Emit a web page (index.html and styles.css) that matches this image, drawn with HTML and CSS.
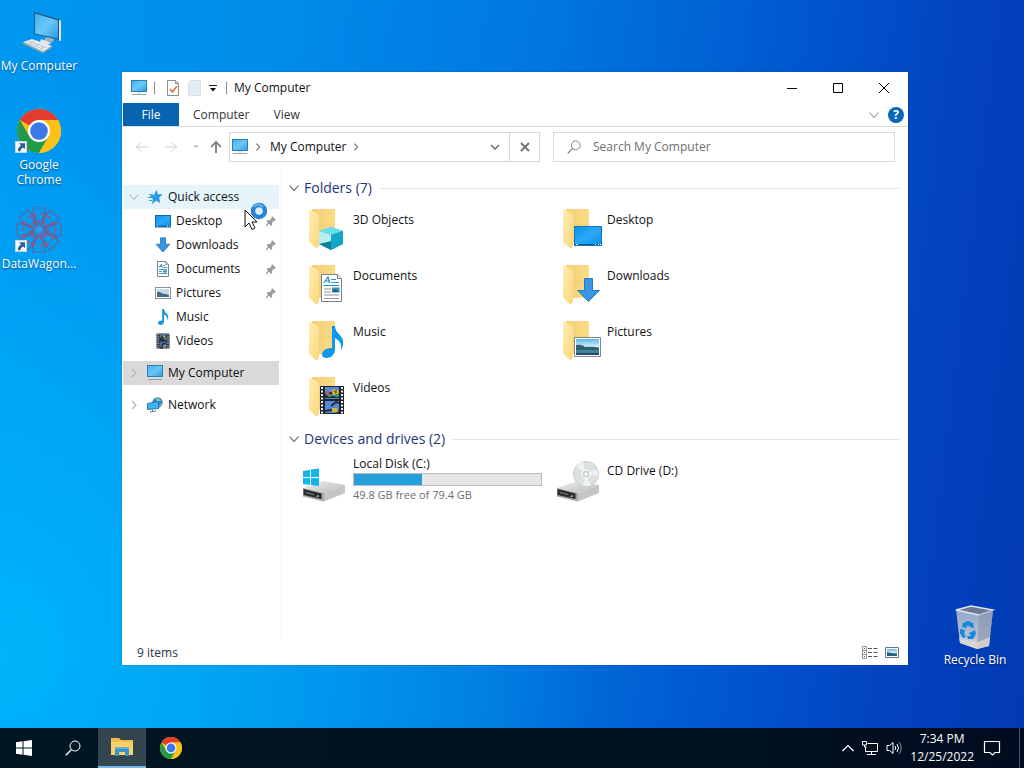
FILE: index.html
```html
<!DOCTYPE html>
<html lang="en">
<head>
<meta charset="utf-8">
<title>My Computer</title>
<link rel="stylesheet" href="styles.css">
</head>
<body>
<svg class="defs" aria-hidden="true">
  <defs>
    <linearGradient id="screen" x1="0" y1="0" x2="1" y2="1"><stop offset="0" stop-color="#3fb2f2"/><stop offset=".5" stop-color="#6cc6f9"/><stop offset="1" stop-color="#2b9be4"/></linearGradient>
    <linearGradient id="desk" x1="0" y1="0" x2="1" y2="1"><stop offset="0" stop-color="#0a93ee"/><stop offset=".5" stop-color="#2ba8f5"/><stop offset="1" stop-color="#0a93ee"/></linearGradient>
    <linearGradient id="fold" x1="0" y1="0" x2="1" y2="1"><stop offset="0" stop-color="#ffeeb8"/><stop offset="1" stop-color="#fbd778"/></linearGradient>
    <linearGradient id="foldback" x1="0" y1="0" x2="1" y2="0"><stop offset="0" stop-color="#f0cf78"/><stop offset="1" stop-color="#fbdc83"/></linearGradient>
    <linearGradient id="sky" x1="0" y1="0" x2="0" y2="1"><stop offset="0" stop-color="#5fb4ec"/><stop offset=".5" stop-color="#d9f0fa"/><stop offset=".55" stop-color="#4b8c86"/><stop offset="1" stop-color="#2d7fb8"/></linearGradient>
    <linearGradient id="metal" x1="0" y1="0" x2="1" y2="1"><stop offset="0" stop-color="#f1f1f1"/><stop offset="1" stop-color="#b9b9b9"/></linearGradient>
    <linearGradient id="bin" x1="0" y1="0" x2="0" y2="1"><stop offset="0" stop-color="#8da3c8"/><stop offset=".7" stop-color="#b5c0d2"/><stop offset="1" stop-color="#e0ddd8"/></linearGradient>
  </defs>
  <symbol id="pc" viewBox="0 0 16 16">
    <rect x=".5" y=".5" width="15" height="11" fill="url(#screen)" stroke="#2f7fae"/>
    <path d="M1 14.500h14" stroke="#8fa5b2"/><path d="M6 12h4v1.500H6z" fill="#d3e0e8"/>
  </symbol>
  <symbol id="star" viewBox="0 0 16 16">
    <path d="M9.500 1.500l1 4 4.500.2-3.300 3L13 13.500l-4-2.200L5.500 14.500l.7-4.700L3 7l4.200-.7z" fill="#2a9be6" stroke="#1781cb" stroke-width=".5"/>
    <path d="M2 5.500h4M1 8.500h4M2 11.500h3" stroke="#3a9fe2"/>
  </symbol>
  <symbol id="desktop" viewBox="0 0 16 16">
    <rect x=".5" y="2.500" width="15" height="11.500" fill="url(#desk)" stroke="#1268a8"/><path d="M1 13h14" stroke="#0b5798" /><path d="M2 13h1m9 0h1m1 0h.6" stroke="#fff"/>
  </symbol>
  <symbol id="down" viewBox="0 0 16 16">
    <path d="M5.500.8h5v6.400H15L8 15 1 7.200h4.500z" fill="#3994e0" stroke="#2477bd" stroke-width=".8"/>
  </symbol>
  <symbol id="doc" viewBox="0 0 16 16">
    <path d="M2.500.5h8l3 3v12h-11z" fill="#fff" stroke="#75838d"/><path d="M10.500.5v3h3" fill="none" stroke="#75838d" stroke-width=".7"/>
    <path d="M4.500 6.500L6.500 3l1 3.500M4 5.300h3M8.500 4.500H10M8.500 6.500h4M4 8.500h8M4 10.500h3M4 12.500h8" fill="none" stroke="#2b8dbf" stroke-width=".9"/><path d="M8 9.500h4v2H8z" fill="#3f87b5"/>
  </symbol>
  <symbol id="picture" viewBox="0 0 16 16">
    <rect x=".5" y="2.500" width="15" height="11" fill="#fff" stroke="#8b9399"/><rect x="2" y="4" width="12" height="8" fill="#c3dcea"/><path d="M2 7q3-1 5 1.500 4 0 7 1.500v2H2z" fill="#466a80"/>
  </symbol>
  <symbol id="note" viewBox="0 0 16 16">
    <path d="M7.200 0H9q.4 3 3 5 2.400 2.300.4 6Q12.500 7 9 5.600V12.500Q8.800 15.500 5.800 16 3 16.200 3 13.800 3.200 11.300 7.200 11.400z" fill="#1296e6"/>
  </symbol>
  <symbol id="film" viewBox="0 0 16 16">
    <path d="M1.500.5h13v15h-13z" fill="#272b37"/><path d="M3 1v14M13 1v14" stroke="#edf2f5" stroke-dasharray="1.200 1"/>
    <path d="M4.500 1h7v6h-7zM4.500 8.500h7v6.500h-7z" fill="#4b68a0"/><path d="M5 5.500h1.500L8 3.500h3.500M5 6.500h4M7 13.500l1.500-3h2M5 14.700h3" stroke="#18322c" stroke-width="1.400" fill="none"/><path d="M8 2.500h2.500v2H8zM8.500 12h2.500v2H8.500z" fill="#b9a234"/><path d="M10 5h1.500v1.500H10z" fill="#3d9d43"/>
  </symbol>
  <symbol id="network" viewBox="0 0 16 16">
    <circle cx="10.500" cy="5.500" r="5.200" fill="#3f86a8"/><path d="M8 1.500q4-1 6 2l-3 1.500zM12 8l3-2-1 4z" fill="#86bccd"/>
    <path d="M.5 6.500l11-2v7L.5 12.500z" fill="#41b4f2" stroke="#1f80c0"/><path d="M5.500 12.500v2M3 15l6-1" stroke="#637f90"/>
  </symbol>
  <symbol id="pin" viewBox="0 0 12 12">
    <path d="M7 1l4 4-1.200.7-.6-.2-2.200 2.200.2 2L6 11 1.500 6l1.200-1 2 .2 2-2.200-.2-1z" fill="#959ca2"/><path d="M4 7.500L1 11" stroke="#959ca2" stroke-width="1.200"/>
  </symbol>
  <symbol id="chrome" viewBox="0 0 48 48">
    <circle cx="24" cy="24" r="22" fill="#fbc116"/>
    <path d="M24 24L4.950 13A22 22 0 0 1 43.050 13H24z" fill="#e33b2e"/>
    <path d="M4.950 13A22 22 0 0 0 24 46L33.500 29.500 14.500 29.500z" fill="#229a4b"/>
    <path d="M24 13H43.050A22 22 0 0 1 24 46L33.500 29.500z" fill="#fbc116"/><circle cx="24" cy="24" r="11" fill="#fff"/><circle cx="24" cy="24" r="8.800" fill="#3b78e8"/>
  </symbol>
  <symbol id="shortcut" viewBox="0 0 12 12">
    <rect x=".5" y=".5" width="11" height="11" fill="#f4f8fb" stroke="#c3d3df"/><path d="M4 2.200h6V8L8 6.500Q5.500 7.500 5.300 10.200H3Q2.500 7 6 4.300z" fill="#2c5d9f"/>
  </symbol>
  <symbol id="folder" viewBox="0 0 48 48">
    <path d="M11 6h22q1 0 1 1v31q0 1-1 1H13z" fill="url(#foldback)"/>
    <path d="M8 6l9 5q1 1 1 2v29q-1 4-3 3L8 39z" fill="url(#fold)"/><path d="M18 22h16" stroke="#f2cd70" stroke-width=".8"/>
  </symbol>
  <symbol id="drive" viewBox="0 0 48 48">
    <path d="M2 32L22 25 44 29 23 37z" fill="url(#metal)"/><path d="M2 32l21 5v8.500L2 40.500z" fill="#a5a6a8"/><path d="M23 37l21-8v8L23 45.500z" fill="#c4c5c6"/>
    <path d="M2.500 33l18 4.500v5.500L2.500 39z" fill="#2a2c2f"/><path d="M5 36.500l8 2m2 2h3" stroke="#7d8584"/><path d="M16 40h2" stroke="#8ed8c5"/>
  </symbol>
  <symbol id="chev" viewBox="0 0 12 12"><path d="M1.500 3.500L6 8.500l4.500-5" fill="none" stroke="currentColor" stroke-width="1.100"/></symbol>
  <symbol id="chevr" viewBox="0 0 12 12"><path d="M4 2l4 4-4 4" fill="none" stroke="currentColor" stroke-width="1.300"/></symbol>
  <symbol id="lens" viewBox="0 0 16 16"><circle cx="10" cy="6" r="5" fill="none" stroke="currentColor"/><path d="M6.500 9.500L.8 15.200" stroke="currentColor" stroke-width="1.300"/></symbol>
</svg>

<main class="desktop">
  <nav class="shortcuts" aria-label="Desktop">
    <a class="shortcut" href="#">
      <svg class="ico48" viewBox="0 0 48 48">
        <path d="M19 4l27 8v20l-27-6z" fill="#245674"/><path d="M20 5.500l23 7v18l-23-5z" fill="url(#screen)"/><path d="M44 12l2 .5v20l-2 .5z" fill="#dce9f0"/>
        <path d="M31 29l8 2-1 3-9-1z" fill="#a6b4bc"/><path d="M26 31l11 4-5 2-7-3z" fill="#e0e6e9"/><path d="M8 34l9-3 20 7-9 6z" fill="#e8edef"/><path d="M8 34l20 10v1.500L8 36zM28 44l9-6v1.500l-9 6z" fill="#8ba0ab"/><path d="M12 34.500l17 7.500M14 33l18 7M20 39l5-3M15 36l5-3M25 41l5-3" stroke="#b4bfc6" stroke-width=".8"/>
      </svg>
      <span>My Computer</span>
    </a>
    <a class="shortcut" href="#">
      <span class="stack"><svg class="ico48"><use href="#chrome"/></svg><svg class="arrow"><use href="#shortcut"/></svg></span>
      <span class="two">Google Chrome</span>
    </a>
    <a class="shortcut" href="#">
      <span class="stack">
        <svg class="ico48" viewBox="0 0 48 48" fill="none" stroke="#6a6399" stroke-width="1.200">
          <g id="petals"><path d="M24 22Q16 10 18 2h12q2 8-6 20zM24 18q-8-5-8-11M24 18q8-5 8-11"/><path d="M24 22Q16 10 18 2h12q2 8-6 20zM24 18q-8-5-8-11M24 18q8-5 8-11" transform="rotate(90 24 24)"/><path d="M24 22Q16 10 18 2h12q2 8-6 20zM24 18q-8-5-8-11M24 18q8-5 8-11" transform="rotate(180 24 24)"/><path d="M24 22Q16 10 18 2h12q2 8-6 20zM24 18q-8-5-8-11M24 18q8-5 8-11" transform="rotate(270 24 24)"/></g>
          <use href="#petals" transform="rotate(45 24 24)"/>
          <circle cx="24" cy="24" r="9" stroke="#a34e80" stroke-width="2" stroke-dasharray="3 2"/><circle cx="24" cy="24" r="16" stroke="#a3567e" stroke-width="2" stroke-dasharray="3 4"/><circle cx="24" cy="24" r="4" fill="#1aa3ee" stroke="#6b6cab"/>
        </svg>
        <svg class="arrow"><use href="#shortcut"/></svg>
      </span>
      <span>DataWagon...</span>
    </a>
  </nav>

  <a class="shortcut recycle" href="#">
    <svg class="ico48" viewBox="0 0 48 48">
      <path d="M5 8l15-4 22 4-4 36-12 3-17-6z" fill="url(#bin)"/><path d="M5 8l15-4 22 4-14 5z" fill="#6e7993" stroke="#dfe7f2" stroke-width="1.300"/><path d="M28 13l14-5-4 36-12 3z" fill="#8b96ad" opacity=".65"/><path d="M8 36l19 4 12-5-1 9-12 3-17-6z" fill="#d9d6d2" opacity=".8"/>
      <g fill="#1689df"><path d="M12 21l5-2 5 2 1 5-4-1-2-2-2 3-4-1z"/><path d="M9 27l5 1-1 3 2 4-3 1-3-5z"/><path d="M18 31l6-3 1 4-3 5-5 0-1-3h4z"/></g>
    </svg>
    <span>Recycle Bin</span>
  </a>

  <section class="window" aria-label="My Computer">
    <header class="titlebar">
      <svg class="ico16 wide"><use href="#pc"/></svg>
      <span class="bar"></span>
      <button class="quick" aria-label="Properties"><svg class="ico16" viewBox="0 0 16 16"><path d="M2.500.5h8l3 3v12h-11z" fill="#fbfbfb" stroke="#8c8c8c"/><path d="M10.500.5v3h3" fill="none" stroke="#8c8c8c"/><path d="M5 9l2.500 3L12 6" fill="none" stroke="#d67737" stroke-width="1.500"/></svg></button>
      <button class="quick" aria-label="New folder"><svg class="ico16" viewBox="0 0 16 16"><path d="M3.500.5h10v15h-12V3z" fill="#e3ecf3" stroke="#d8e1e8"/></svg></button>
      <button class="more" aria-label="Customize toolbar"><svg class="ico8" viewBox="0 0 8 8"><path d="M0 1.500h8" stroke="#222"/><path d="M1 4h6L4 7.500z" fill="#111"/></svg></button>
      <span class="bar"></span>
      <h1>My Computer</h1>
      <div class="controls">
        <button aria-label="Minimize"><svg class="ico12" viewBox="0 0 12 12"><path d="M1 6.500h10" stroke="#000"/></svg></button>
        <button aria-label="Maximize"><svg class="ico12" viewBox="0 0 12 12"><path d="M1.500 1.500h9v9h-9z" fill="none" stroke="#000"/></svg></button>
        <button aria-label="Close"><svg class="ico12" viewBox="0 0 12 12"><path d="M1 1l10 10M11 1L1 11" stroke="#000"/></svg></button>
      </div>
    </header>

    <div class="ribbon">
      <button class="file">File</button>
      <button>Computer</button>
      <button>View</button>
      <span class="ribbon-end">
        <button aria-label="Expand ribbon"><svg class="ico12"><use href="#chev"/></svg></button>
        <button class="help" aria-label="Help">?</button>
      </span>
    </div>

    <div class="navbar">
      <div class="history">
        <button class="off" aria-label="Back"><svg class="ico14" viewBox="0 0 14 14"><path d="M13 7H1.500M6.500 2l-5 5 5 5" fill="none" stroke="currentColor"/></svg></button>
        <button class="off" aria-label="Forward"><svg class="ico14" viewBox="0 0 14 14"><path d="M1 7h11.500M7.500 2l5 5-5 5" fill="none" stroke="currentColor"/></svg></button>
        <button class="off" aria-label="Recent"><svg class="ico8" viewBox="0 0 8 8"><path d="M1 2h6L4 5.500z" fill="currentColor"/></svg></button>
        <button aria-label="Up"><svg class="ico14" viewBox="0 0 14 14"><path d="M7 13V2M2 7l5-5 5 5" fill="none" stroke="currentColor" stroke-width="1.700"/></svg></button>
      </div>
      <div class="address">
        <svg class="ico16"><use href="#pc"/></svg>
        <svg class="ico10 sep" viewBox="0 0 12 12"><use href="#chevr"/></svg>
        <a href="#">My Computer</a>
        <svg class="ico10 sep" viewBox="0 0 12 12"><use href="#chevr"/></svg>
        <button class="drop" aria-label="Previous locations"><svg class="ico12" viewBox="0 0 12 12"><path d="M2 4l4 4 4-4" fill="none" stroke="currentColor" stroke-width="1.700"/></svg></button>
        <button class="stop" aria-label="Stop"><svg class="ico12" viewBox="0 0 12 12"><path d="M2 2l8 8M10 2l-8 8" stroke="currentColor" stroke-width="2"/></svg></button>
      </div>
      <label class="search">
        <svg class="ico14"><use href="#lens"/></svg>
        <input type="search" aria-label="Search My Computer" placeholder="Search My Computer">
      </label>
    </div>

    <div class="body">
      <nav class="tree" aria-label="Folders">
        <a class="row hover" href="#"><svg class="ico12"><use href="#chev"/></svg><svg class="ico16"><use href="#star"/></svg><span>Quick access</span></a>
        <a class="row child" href="#"><svg class="ico16"><use href="#desktop"/></svg><span>Desktop</span><svg class="ico12 pin"><use href="#pin"/></svg></a>
        <a class="row child" href="#"><svg class="ico16"><use href="#down"/></svg><span>Downloads</span><svg class="ico12 pin"><use href="#pin"/></svg></a>
        <a class="row child" href="#"><svg class="ico16"><use href="#doc"/></svg><span>Documents</span><svg class="ico12 pin"><use href="#pin"/></svg></a>
        <a class="row child" href="#"><svg class="ico16"><use href="#picture"/></svg><span>Pictures</span><svg class="ico12 pin"><use href="#pin"/></svg></a>
        <a class="row child" href="#"><svg class="ico16"><use href="#note"/></svg><span>Music</span></a>
        <a class="row child" href="#"><svg class="ico16"><use href="#film"/></svg><span>Videos</span></a>
        <a class="row root active" href="#"><svg class="ico12"><use href="#chevr"/></svg><svg class="ico16"><use href="#pc"/></svg><span>My Computer</span></a>
        <a class="row root" href="#"><svg class="ico12"><use href="#chevr"/></svg><svg class="ico16"><use href="#network"/></svg><span>Network</span></a>
      </nav>

      <div class="content">
        <h2><svg class="ico12"><use href="#chev"/></svg>Folders (7)</h2>
        <div class="tiles folders">
          <a class="tile" href="#"><svg class="ico48" viewBox="0 0 48 48"><use href="#folder"/><path d="M18 28l12-4 12 4v13l-12 6-12-6z" fill="#2dbfd9"/><path d="M18 28l12-4 12 4-12 4z" fill="#6bdcea"/><path d="M18 28l12 4v8l-12 1z" fill="#b9eef1"/><path d="M30 32l12-4v13l-12 6z" fill="#14a5c5"/><path d="M18 41l12-3v9z" fill="#127c9b"/></svg><span>3D Objects</span></a>
          <a class="tile" href="#"><svg class="ico48" viewBox="0 0 48 48"><use href="#folder"/><rect x="19.500" y="23.500" width="27" height="19" fill="url(#desk)" stroke="#1276bb"/><path d="M20 41.500h26" stroke="#075496"/><path d="M21 41.500h2m17 0h1m2 0h1m1 0h1" stroke="#fff"/></svg><span>Desktop</span></a>
          <a class="tile" href="#"><svg class="ico48" viewBox="0 0 48 48"><use href="#folder"/><path d="M20.500 15.500h16l4 4v23h-20z" fill="#fff" stroke="#777e86"/><path d="M36.500 15.500v4h4" fill="#eee" stroke="#777e86"/><path d="M23 24l4-6 1.500 6M24 22h5M30 20.500h5M30 23.500h8M22.500 26.500h16" fill="none" stroke="#2a91ca" stroke-width="1.200"/><path d="M23 30h7M23 33h7M23 36h15M23 39.500h15" stroke="#8995a2"/><path d="M31 28.500h7.500v5H31z" fill="#3a8fb8"/><path d="M31 33l3-3 4 3z" fill="#25576d"/></svg><span>Documents</span></a>
          <a class="tile" href="#"><svg class="ico48" viewBox="0 0 48 48"><use href="#folder"/><path d="M29.500 19.500h8v12h7L33.500 42.500 22.500 31.500h7z" fill="#3a96e2" stroke="#267cc3"/></svg><span>Downloads</span></a>
          <a class="tile" href="#"><svg class="ico48" viewBox="0 0 48 48"><use href="#folder"/><path d="M31 11h3q0 5 5 9 6 7 1 15 1-9-6-12v12q-1 7-8 8-5 0-5-4 1-6 10-6z" fill="#0c98ec"/></svg><span>Music</span></a>
          <a class="tile" href="#"><svg class="ico48" viewBox="0 0 48 48"><use href="#folder"/><path d="M19.500 22.500h26v19h-26z" fill="#fff" stroke="#7b8994"/><path d="M21 24h23v16H21z" fill="url(#sky)"/><path d="M21 30q6-1 9 2 8-1 14 1v2H21z" fill="#2d626b"/><path d="M21 38h23v2H21z" fill="#2b4c67"/></svg><span>Pictures</span></a>
          <a class="tile" href="#"><svg class="ico48" viewBox="0 0 48 48"><use href="#folder"/><path d="M19 15h24v28H19z" fill="#20242f"/><path d="M21 16v27M41 16v27" stroke="#f3f3ed" stroke-width="2" stroke-dasharray="2 1.500"/><path d="M24 16h14v12H24zM24 30h14v12H24z" fill="#5a87d9"/><path d="M24 24l6-2 8 2v2H24zM30 35l5-4 3 1M24 40l6-1 8 2" stroke="#1a3431" stroke-width="2" fill="none"/><path d="M32 18h4l2 3-2 3h-4l-1-3zM31 37h5l1 4h-6z" fill="#dcb62b"/><path d="M25 20h3v4h-3z" fill="#ce5268"/><path d="M34 23h4v3h-4zM27 23h3v3h-3z" fill="#48934b"/><path d="M33 20l2 2M35 18v4" stroke="#49302f"/></svg><span>Videos</span></a>
        </div>
        <h2><svg class="ico12"><use href="#chev"/></svg>Devices and drives (2)</h2>
        <div class="tiles drives">
          <a class="tile" href="#">
            <svg class="ico48" viewBox="0 0 48 48"><use href="#drive"/><path d="M2 15l7-1.200V21H2zM10 13.600L18 12.500V21h-8zM2 22h7v7l-7-1zM10 22h8v8l-8-1z" fill="#10b5e9"/></svg>
            <span class="disk"><label for="usage">Local Disk (C:)</label><progress id="usage" max="79.4" value="29">29.6 GB used</progress><small>49.8 GB free of 79.4 GB</small></span>
          </a>
          <a class="tile" href="#">
            <svg class="ico48" viewBox="0 0 48 48"><use href="#drive"/><circle cx="31" cy="18" r="12.500" fill="#dce1e2" stroke="#c6cccd"/><path d="M31 18L21 10.500A12 12 0 0 1 28 6zM31 18l11-5a12 12 0 0 1 1 7zM31 18l5 11.500a12 12 0 0 1-8 0z" fill="#eff2f2"/><circle cx="31" cy="18" r="4" fill="#cbd1d3" stroke="#fff"/><circle cx="31" cy="18" r="1.500" fill="#fff"/></svg>
            <span class="cd">CD Drive (D:)</span>
          </a>
        </div>
      </div>
    </div>

    <footer class="status">
      <span>9 items</span>
      <button aria-label="Details view"><svg class="ico16" viewBox="0 0 16 16"><path d="M.5 1.500h4v12h-4zM.5 5.500h4M.5 9.500h4" fill="none" stroke="#777" stroke-width=".8"/><path d="M2 3.500h1M2 7.500h1M2 11.500h1M6 3.500h4m1.500 0h4M6 7.500h4m1.500 0h4M6 11.500h4m1.500 0h4" stroke="#555"/></svg></button>
      <button aria-label="Icon view"><svg class="ico16" viewBox="0 0 16 16"><path d="M1.500 2.500h13v10h-13z" fill="#fff" stroke="#647a93"/><path d="M3 4h10v7H3z" fill="url(#sky)"/><path d="M3 7l4 1 6 2v1H3z" fill="#276172"/></svg></button>
    </footer>
  </section>

  <svg class="pointer" viewBox="0 0 28 32" aria-hidden="true">
    <circle cx="17" cy="10" r="6" fill="#d9ecfa" stroke="#2b83d6" stroke-width="4.500"/><path d="M12 6q4-5 9 0" fill="none" stroke="#68b5f0" stroke-width="2"/>
    <path d="M3 9v17l4-4 3 6.500 3-1.500-3-6h5z" fill="#fff" stroke="#111"/>
  </svg>
</main>

<footer class="taskbar">
  <button class="task" aria-label="Start"><svg class="ico16" viewBox="0 0 16 16"><path d="M0 2.200L6.500 1.300V7.500H0zM7.500 1.200L16 0v7.500H7.500zM0 8.500h6.500v6.200L0 13.800zM7.500 8.500H16V16l-8.500-1.200z" fill="#fff"/></svg></button>
  <button class="task" aria-label="Search"><svg class="ico16"><use href="#lens"/></svg></button>
  <button class="task current" aria-label="File Explorer"><svg class="ico24" viewBox="0 0 24 24"><path d="M1 3h8l2 2h12v15H1z" fill="#f2bc4c"/><path d="M1 7h22v13H1z" fill="#fdd167"/><path d="M5 12h14v9h-4v-4H9v4H5z" fill="#3f91c9"/><path d="M5 12h14v2H5z" fill="#63aedb"/></svg></button>
  <button class="task" aria-label="Google Chrome"><svg class="ico24"><use href="#chrome"/></svg></button>
  <div class="tray">
    <button aria-label="Show hidden icons"><svg class="ico12" viewBox="0 0 12 12"><path d="M.5 9L6 3.500 11.500 9" fill="none" stroke="#fff" stroke-width="1.200"/></svg></button>
    <button aria-label="Network"><svg class="ico16" viewBox="0 0 16 16" fill="none" stroke="#fff"><path d="M5.500 3.500h10v8H3.500V7M9.500 11.500v3M5 14.500h9M.5 1.500h4v3.500h-4zM2.500 5v2h2"/></svg></button>
    <button aria-label="Volume"><svg class="ico16" viewBox="0 0 16 16" fill="none" stroke="#fff"><path d="M1 5.500h2.500L7 2.500v11L3.500 10.500H1zM9 6q1.500 2 0 4M11 4q3 4 0 8"/><path d="M13 2q4.500 6 0 12" stroke="#8893a0"/></svg></button>
    <button class="clock"><time>7:34 PM</time><time>12/25/2022</time></button>
    <button class="notify" aria-label="Notifications"><svg class="ico18" viewBox="0 0 18 18"><path d="M1.500 2.500h15v11H12L9.500 16 7 13.500H1.500z" fill="none" stroke="#fff" stroke-width="1.200"/></svg></button>
    <button class="peek" aria-label="Show desktop"></button>
  </div>
</footer>
</body>
</html>
```

FILE: styles.css
```css
* { box-sizing: border-box; }

body {
  margin: 0;
  min-height: 100vh;
  display: flex;
  flex-direction: column;
  font: 12px/16px "Open Sans", "Noto Sans", sans-serif;
  color: #111;
  background:
    radial-gradient(ellipse 60% 75% at 0 85%, rgba(0, 190, 255, .75), transparent),
    linear-gradient(97deg, #0098f1 0%, #008ceb 25%, #0076de 50%, #0056ce 73%, #0342bf 87%, #023ab2 100%);
}

a { color: inherit; text-decoration: none; }

button {
  display: inline-flex;
  align-items: center;
  justify-content: center;
  padding: 0;
  border: 0;
  background: none;
  color: inherit;
  font: inherit;
}

h1, h2 { margin: 0; font-weight: 400; }
svg { display: block; flex: none; }

.defs { position: absolute; width: 0; height: 0; }
.ico8 { width: 8px; height: 8px; }
.ico10 { width: 10px; height: 10px; }
.ico12 { width: 12px; height: 12px; }
.ico14 { width: 14px; height: 14px; }
.ico16 { width: 16px; height: 16px; }
.ico18 { width: 18px; height: 18px; }
.ico24 { width: 24px; height: 24px; }
.ico48 { width: 48px; height: 48px; }

.desktop { position: relative; flex: 1; }

/* Desktop shortcuts */
.shortcuts {
  display: grid;
  grid-auto-rows: 99px;
  width: 78px;
  padding-top: 8px;
}

.shortcut {
  display: flex;
  flex-direction: column;
  align-items: center;
  width: 78px;
  color: #fff;
  line-height: 15px;
  text-align: center;
  text-shadow: 0 1px 2px rgba(0, 20, 60, .6);
}

.shortcut > span:last-child { padding-top: 2px; }
.shortcut > .two { width: 60px; }
.stack { position: relative; }
.arrow { position: absolute; left: 0; bottom: 2px; width: 12px; height: 12px; }
.recycle { position: absolute; right: 10px; bottom: 61px; }

/* Explorer window */
.window {
  position: absolute;
  inset: 72px 116px 63px 122px;
  display: flex;
  flex-direction: column;
  background: #fff;
  box-shadow: 0 0 1px rgba(0, 40, 100, .6);
}

.titlebar { display: flex; align-items: center; height: 31px; padding-left: 8px; }
.titlebar .wide { width: 18px; }
.bar { width: 1px; height: 12px; margin: 0 7px 0 6px; background: #888; }
.quick { width: 22px; height: 24px; }
.more { width: 14px; height: 24px; }
.titlebar h1 { flex: 1; font-size: 12px; }
.controls { display: flex; }
.controls button { width: 46px; height: 31px; }

.controls { padding-right: 1px; }

.ribbon {
  display: flex;
  height: 24px;
  padding-left: 1px;
  border-bottom: 1px solid #dcdcdc;
  color: #333;
}

.ribbon > button { padding: 0 12px; }
.ribbon > .file { width: 56px; margin-right: 2px; background: #0863b1; color: #fff; }
.ribbon-end { display: flex; align-items: center; gap: 8px; margin-left: auto; padding-right: 4px; color: #999; }
.help { width: 16px; height: 16px; border-radius: 50%; background: #0868b5; color: #fff; font-weight: 700; }

.navbar {
  display: grid;
  grid-template-columns: 98px minmax(0, 311fr) minmax(0, 355fr);
  height: 40px;
  padding: 5px 13px 5px 9px;
  color: #777;
}

.history { display: flex; }
.history button { width: 26px; }
.history button:first-child { width: 22px; }
.history button:nth-child(2) { width: 36px; }
.history button:nth-child(3) { width: 14px; }
.off { color: #ccc; }

.address { display: flex; align-items: center; padding-left: 2px; border: 1px solid #d9d9d9; color: #111; }
.address .sep { margin: 0 7px 0 5px; color: #777; }
.address .drop { width: 28px; height: 28px; margin-left: auto; color: #777; }
.address .stop { width: 30px; height: 28px; border-left: 1px solid #d9d9d9; color: #777; }

.search { display: flex; align-items: center; gap: 12px; margin-left: 13px; padding: 0 13px; border: 1px solid #d9d9d9; }
.search input { flex: 1; min-width: 0; padding: 0; border: 0; outline: 0; background: none; font: inherit; color: #333; }
.search input::placeholder { color: #6f6f6f; opacity: 1; }

.body { display: flex; flex: 1; min-height: 0; }

.tree { width: 159px; padding: 18px 1px 0; border-right: 1px solid #fafafa; }
.row { display: flex; align-items: center; height: 24px; padding-left: 5px; }
.row > .ico12:first-child { margin-right: 7px; color: #b5b5b5; }
.row span { margin-left: 5px; }
.row.child { padding-left: 32px; }
.row .pin { margin: 0 2px 0 auto; }
.root { margin-top: 8px; }
.hover { background: #e5f3fb; }
.active { background: #d9d9d9; }

.content { flex: 1; padding: 9px 9px 0 7px; }
.content h2 { display: flex; align-items: center; height: 24px; color: #24367c; font-size: 14px; line-height: 20px; }
.content h2 svg { margin-right: 4px; color: #555; }
.content h2::after { content: ""; flex: 1; height: 1px; margin-left: 8px; background: #e2e2e2; }

.tiles { display: grid; grid-template-columns: repeat(auto-fill, 254px); padding-left: 13px; }
.folders { grid-auto-rows: 56px; padding-top: 3px; }
.tile { display: flex; gap: 4px; }
.folders .tile span { padding-top: 9px; }
.drives { padding-top: 5px; }
.disk { display: flex; flex-direction: column; align-items: flex-start; gap: 1px; }
.cd { padding-top: 7px; }

progress { width: 189px; height: 13px; border: 1px solid #bcbcbc; background: #e6e6e6; appearance: none; }
progress::-webkit-progress-bar { background: #e6e6e6; }
progress::-webkit-progress-value { background: #26a0da; }
small { font-size: 11px; color: #6d6d6d; }

.status { display: flex; align-items: center; gap: 6px; height: 25px; padding: 0 8px 0 15px; color: #26344d; }
.status span { margin-right: auto; }

.pointer { position: absolute; left: 242px; top: 201px; width: 28px; height: 32px; }

/* Taskbar */
.taskbar { display: flex; height: 40px; background: linear-gradient(90deg, #001622, #00131f 60%, #000b20); color: #fff; }
.task { width: 48px; margin-right: 1px; }
.current { border-bottom: 2px solid #76b9ed; background: #33464f; }
.tray { display: flex; align-items: center; gap: 8px; margin-left: auto; }
.clock { flex-direction: column; line-height: 18px; }
.notify { width: 26px; margin-right: 6px; margin-left: -3px; }
.peek { width: 5px; height: 40px; border-left: 1px solid #4b5361; }
```
